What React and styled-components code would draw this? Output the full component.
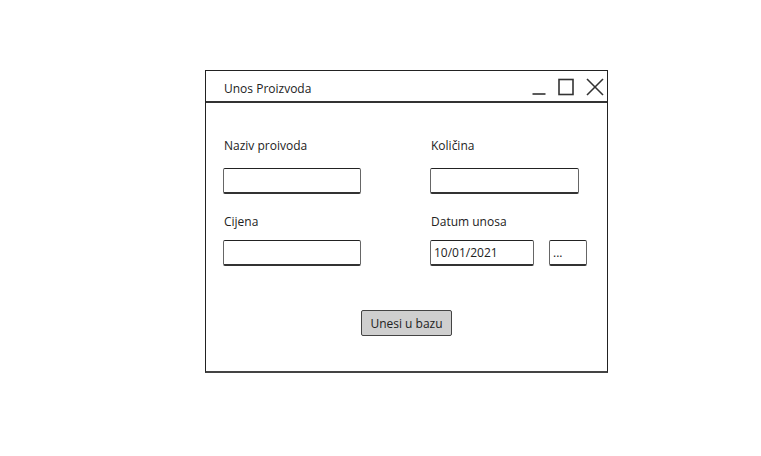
import React from "react";
import styled, { createGlobalStyle } from "styled-components";

const Global = createGlobalStyle`
  html, body { margin: 0; padding: 0; background: #fff; }
  body { font-family: "Open Sans", "DejaVu Sans", sans-serif; color: #222; }
`;

const Page = styled.div`
  width: 761px;
  height: 456px;
  padding: 70px 0 0 205px;
  box-sizing: border-box;
`;

const Window = styled.div`
  width: 403px;
  height: 303px;
  box-sizing: border-box;
  border: 1px solid #222;
  border-bottom: 2px solid #444;
  display: flex;
  flex-direction: column;
  background: #fff;
`;

const TitleBar = styled.div`
  height: 32px;
  flex: none;
  border-bottom: 2px solid #333;
  display: flex;
  align-items: center;
  padding: 1px 3px 0 18px;
  box-sizing: border-box;
`;

const Title = styled.div`
  flex: 1;
  font-size: 12px;
  color: #222;
  padding-top: 3px;
`;

const Controls = styled.div`
  display: flex;
  align-items: center;
  gap: 12px;
`;

const Body = styled.div`
  flex: 1;
  padding: 35px 0 0 17px;
  display: flex;
  flex-direction: column;
`;

const Grid = styled.div`
  display: grid;
  grid-template-columns: 207px 1fr;
  row-gap: 20px;
`;

const Field = styled.div`
  display: flex;
  flex-direction: column;
  gap: ${(p) => p.$gap}px;
`;

const Label = styled.div`
  font-size: 12px;
  line-height: 16px;
  height: 16px;
  color: #222;
  padding-left: 1px;
`;

const Input = styled.div`
  width: ${(p) => p.$w}px;
  height: 26px;
  box-sizing: border-box;
  border: 1px solid #666;
  border-top: 1.5px solid #222;
  border-bottom: 2px solid #333;
  border-radius: 2px;
  font-size: 12px;
  display: flex;
  align-items: center;
  padding-left: 3px;
  color: #222;
  background: #fff;
`;

const Row = styled.div`
  display: flex;
  gap: 15px;
`;

const Footer = styled.div`
  display: flex;
  justify-content: center;
  margin-top: 44px;
  padding-right: 17px;
`;

const Button = styled.div`
  width: 91px;
  height: 26px;
  box-sizing: border-box;
  background: #cfcfcf;
  border: 1px solid #444;
  border-radius: 2px;
  font-size: 12px;
  display: flex;
  align-items: center;
  justify-content: center;
  color: #222;
`;

const Icon = ({ children, w = 18 }) => (
  <svg width={w} height="18" viewBox={`0 0 ${w} 18`} fill="none" stroke="#333" strokeWidth="1.6">
    {children}
  </svg>
);

export default function App() {
  return (
    <>
      <Global />
      <Page>
        <Window>
          <TitleBar>
            <Title>Unos Proizvoda</Title>
            <Controls>
              <Icon w={14}>
                <line x1="0.5" y1="16" x2="13.5" y2="16" />
              </Icon>
              <Icon w={16}>
                <rect x="1" y="1.5" width="14" height="15" />
              </Icon>
              <Icon w={18}>
                <line x1="1" y1="1" x2="17" y2="17" />
                <line x1="17" y1="1" x2="1" y2="17" />
              </Icon>
            </Controls>
          </TitleBar>
          <Body>
            <Grid>
              <Field $gap={14}>
                <Label>Naziv proivoda</Label>
                <Input $w={138} />
              </Field>
              <Field $gap={14}>
                <Label>Količina</Label>
                <Input $w={149} />
              </Field>
              <Field $gap={10}>
                <Label>Cijena</Label>
                <Input $w={138} />
              </Field>
              <Field $gap={10}>
                <Label>Datum unosa</Label>
                <Row>
                  <Input $w={104}>10/01/2021</Input>
                  <Input $w={38}>...</Input>
                </Row>
              </Field>
            </Grid>
            <Footer>
              <Button>Unesi u bazu</Button>
            </Footer>
          </Body>
        </Window>
      </Page>
    </>
  );
}
